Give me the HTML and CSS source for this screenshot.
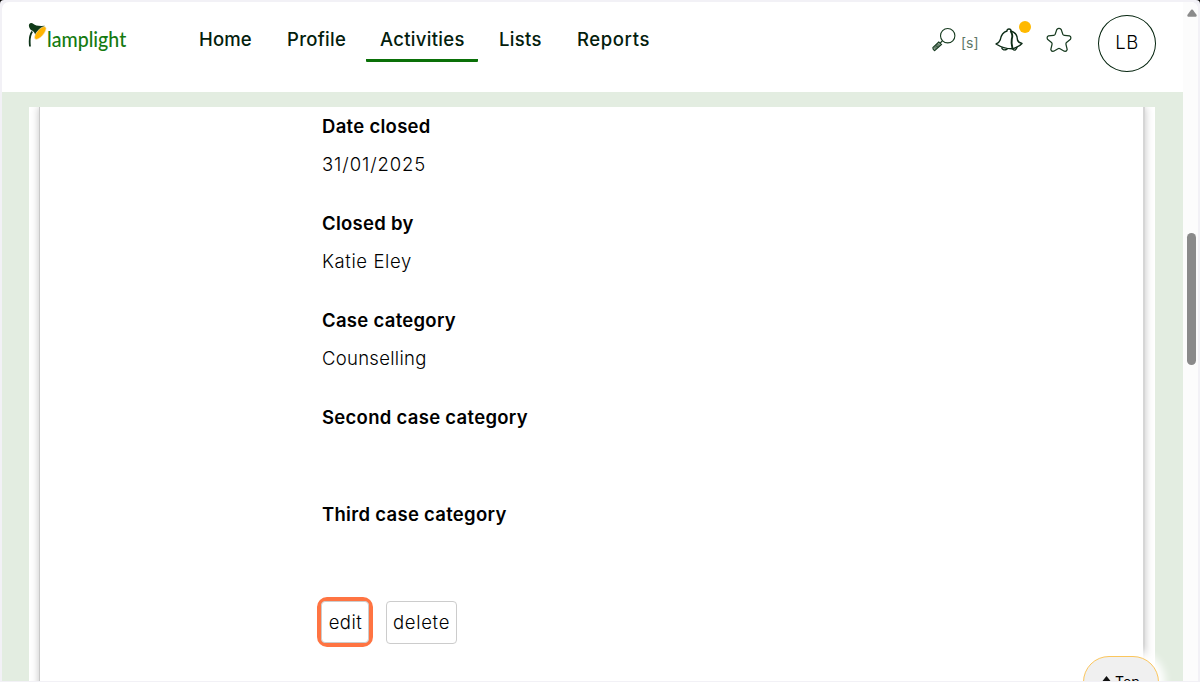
FILE: index.html
```html
<!DOCTYPE html>
<html lang="en">
<head>
<meta charset="utf-8">
<title>Lamplight</title>
<link rel="stylesheet" href="styles.css">
</head>
<body>
<div class="frame">
  <div class="window">
    <div class="app">
      <header class="header">
        <div class="logo">
          <svg class="lamp" width="20" height="27" viewBox="0 0 20 27">
            <path d="M4.200 9.500C1.800 13 1.200 18 2 24.500" fill="none" stroke="#0d3318" stroke-width="1.800"/>
            <path d="M1 4.500C.200 1.500 3.200 0 5.500 2Q8 4.500 16.800 3.800L7.500 16.500Q7.800 11 4.500 8.700Q1.800 8 1 4.500Z" fill="#103a18"/>
            <ellipse cx="12.300" cy="11" rx="8" ry="3.300" transform="rotate(-49 12.300 11)" fill="#ffb400" stroke="#f4ead0" stroke-width=".6"/>
          </svg>
          <span class="wordmark">lamplight</span>
        </div>
        <nav class="nav">
          <a class="home">Home</a>
          <a class="profile">Profile</a>
          <a class="activities active">Activities</a>
          <a class="lists">Lists</a>
          <a class="reports">Reports</a>
        </nav>
        <div class="tools">
          <div class="search">
            <svg width="24" height="26" viewBox="0 0 24 26" fill="none" stroke="#173b20" stroke-width="1.100">
              <circle cx="15.700" cy="8.700" r="7.200"/>
              <path d="M10.500 13.700L8.300 16M6.800 15L.900 20.500Q.500 22.500 2.700 23.700L9.500 17.500Z" fill="#aebdb1"/>
              <path d="M6.500 17L2 21.500M8 17.500L3 22.500M4 18.500L6 20.500" stroke-width=".9"/>
            </svg>
            <span class="shortcut">[s]</span>
          </div>
          <div class="bell">
            <svg width="28" height="25" viewBox="0 0 28 25" fill="none" stroke="#0c2b16" stroke-width="1.400" stroke-linejoin="round">
              <path d="M12 3Q12 1 14 1Q16 1 16 3Q22.500 5 22.500 12Q23 14.500 27 15.500Q24 19 17.500 20.800Q9 21 1 16Q4 15 5.200 12Q6.500 4.500 12 3Z"/>
              <path d="M15.500 3Q18.300 7 16.800 11Q16 15 17.500 20.800" stroke-width="1.900"/>
              <path d="M6.500 19.500Q8 23.500 12.500 20.800M17.500 21Q21 24 22 18.800"/>
            </svg>
            <i class="dot"></i>
          </div>
          <svg class="star" width="26" height="26" viewBox="0 0 26 26" fill="none" stroke="#173b20" stroke-width="1.200" stroke-linejoin="round">
            <path d="M10.800 2.500Q13 .200 15.200 2.500L16.800 7.200Q17.200 8.200 18.500 8.300L23.500 8.800Q25.600 10 24.500 12.200L20.500 15.500Q19.700 16.200 20 17.500L21.200 22.500Q20.700 24.700 18.300 24.200L14 21.700Q13 21.200 12 21.700L7.700 24.200Q5.300 24.700 4.800 22.500L6 17.500Q6.300 16.200 5.500 15.500L1.500 12.200Q.400 10 2.500 8.800L7.500 8.300Q8.800 8.200 9.200 7.200Z"/>
          </svg>
          <div class="avatar">LB</div>
        </div>
      </header>
      <main class="page">
        <div class="panel">
          <section class="card">
            <dl class="details">
              <dt>Date closed</dt><dd class="date">31/01/2025</dd>
              <dt>Closed by</dt><dd class="person">Katie Eley</dd>
              <dt>Case category</dt><dd>Counselling</dd>
              <dt>Second case category</dt><dd></dd>
              <dt>Third case category</dt><dd></dd>
            </dl>
            <div class="actions">
              <span class="ring"><button class="edit">edit</button></span>
              <button class="delete">delete</button>
            </div>
          </section>
        </div>
        <a class="top"><svg width="9" height="11" viewBox="0 0 9 11"><path d="M4.500 0L8.500 5H5.500V11H3.500V5H.500Z" fill="#111"/></svg>Top</a>
      </main>
    </div>
    <div class="scrollbar">
      <svg width="10" height="8" viewBox="0 0 10 8"><path d="M4.200.800Q5 0 5.800.800L9.700 6Q10 7.700 8.700 7.700H1.300Q0 7.700.300 6Z" fill="#8b8b8b"/></svg>
      <div class="thumb"></div>
    </div>
  </div>
</div>
</body>
</html>
```

FILE: styles.css
```css
* { box-sizing: border-box; }
html { background: #000; }
body { margin: 0; overflow: hidden; font-family: Inter, sans-serif; color: #000; }
.frame { width: 1200px; height: 682px; padding: 2px 2px 1px; background: #f2f1f6; border-radius: 4px 4px 0 0; }
.window { display: flex; height: 679px; background: #fff; border-radius: 7px 7px 0 0; overflow: hidden; }
.app { width: 1181px; display: flex; flex-direction: column; }
.header { height: 90px; flex: none; display: flex; align-items: flex-start; }
.logo { display: flex; width: 176px; padding: 20px 0 0 26px; }
.lamp { flex: none; }
.wordmark { font: 500 22px/32px Lato, sans-serif; color: #147a10; white-space: nowrap; margin: 1px 0 0 -1px; transform: scaleX(.89); transform-origin: 0 0; }
.nav { display: flex; padding-top: 18px; margin-left: 7px; }
.nav a { height: 42px; padding: 0 14px; font-size: 18.5px; line-height: 38px; font-weight: 500; color: #03200c; border-bottom: 3px solid transparent; white-space: nowrap; letter-spacing: .3px; }
.nav .home { width: 88px; letter-spacing: .15px; }
.profile { width: 93px; }
.activities { width: 112px; margin-right: 7px; }
.lists { width: 78px; }
.nav .reports { width: 112px; letter-spacing: .6px; }
.nav a.active { border-color: #0a7008; border-radius: 1px; }
.tools { display: flex; margin-left: auto; padding: 13px 27px 0 0; }
.search { display: flex; width: 63px; padding-top: 12px; }
.shortcut { font-size: 14px; line-height: 32px; color: #5d7767; margin-left: 5px; }
.bell { position: relative; width: 52px; padding-top: 13px; }
.dot { position: absolute; left: 24px; top: 6px; width: 12px; height: 12px; border-radius: 50%; background: #ffb900; }
.star { margin: 12px 26px 0 -1px; }
.avatar { width: 58px; height: 57px; border: 1.500px solid #04240e; border-radius: 50%; text-align: center; font-size: 18.500px; line-height: 53px; font-weight: 300; letter-spacing: .4px; }
.page { position: relative; flex: 1; padding: 15px 28px 0 27px; background: #e3ede1; overflow: hidden; }
.panel { height: 100%; padding: 0 10px; background: #fff; overflow: hidden; }
.card { height: 600px; padding: 0 0 0 282px; border: solid #c9c9c9; border-width: 0 2px 0 1px; border-right-color: #d6d6d6; box-shadow: 0 0 8px rgba(0,0,0,.24); }
.details { margin: 0; padding-top: 7px; }
dt, dd { margin: 0; white-space: nowrap; font-size: 18.5px; letter-spacing: .29px; }
dt { height: 25px; line-height: 25px; font-weight: 600; }
dd { height: 72px; line-height: 51px; font-weight: 300; }
.date { letter-spacing: .9px; }
.person { letter-spacing: .6px; }
.actions { display: flex; align-items: flex-start; }
.ring { width: 56px; height: 50px; margin: -2px 13px 0 -5px; border: 4px solid #ff7442; border-radius: 10px; }
button { height: 42px; padding: 0; border: 1px solid #ccc; border-radius: 4px; background: #fff; font: 300 18.5px/38px Inter, sans-serif; letter-spacing: .5px; color: #000; }
.edit { width: 48px; padding-left: 1px; }
.delete { width: 71px; height: 43px; margin-top: 2px; padding-bottom: 1px; letter-spacing: .7px; }
.top { position: absolute; left: 1081px; top: 564px; width: 76px; height: 52px; display: flex; justify-content: center; gap: 4px; padding-top: 18px; border: 1.500px solid #fbc65d; border-radius: 26px; background: #f0f0f0; box-shadow: 0 0 8px 6px #fff; font-size: 14px; line-height: 14px; }
.top svg { margin-top: 1px; }
.scrollbar { width: 15px; background: #fcfcfc; padding: 7px 0 0 4px; }
.scrollbar svg { display: block; }
.thumb { width: 9px; height: 132px; margin-top: 216px; border-radius: 5px; background: #8a8a8a; }
```
